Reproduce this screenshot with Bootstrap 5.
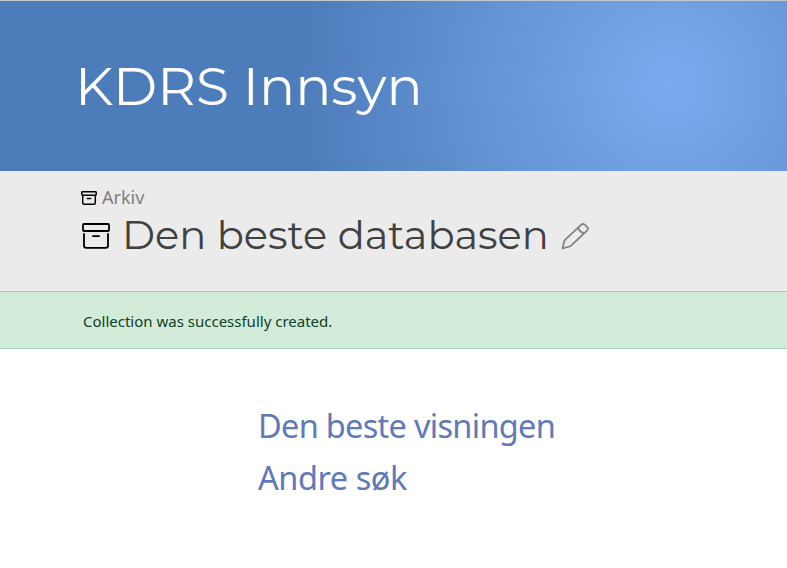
<!DOCTYPE html>
<html lang="nb">
<head>
<meta charset="utf-8">
<meta name="viewport" content="width=device-width, initial-scale=1">
<title>KDRS Innsyn</title>
<link href="https://cdn.jsdelivr.net/npm/bootstrap@5.3.0/dist/css/bootstrap.min.css" rel="stylesheet">
<style>
body { font-family: "Noto Sans", sans-serif; overflow: hidden; }
.site-head { height: 171px; border-top: 1px solid #c4c8cc; padding: 0 0 0 75px;
  background: radial-gradient(circle at 671px 84px, #7aabee 0, #4c7cba 376px); }
.site-name, .page-name { font-family: Montserrat, Inter, sans-serif; font-weight: 400; line-height: 1; white-space: nowrap; }
.site-name { font-size: 53.500px; }
.page-head { height: 120px; background: #ebebeb; padding: 14px 0 0 81px; }
.crumb { font-size: 18px; line-height: 25px; color: #808080; gap: 5px; }
.crumb svg, .page-row > svg { color: #000; }
.page-row { height: 52px; }
.page-name { font-size: 40px; color: #404040; margin: -2px 0 0 11px; }
.page-row .edit-link { color: #808080; margin-left: 12px; }
.notice { height: 58px; padding: 2px 0 0 83px; color: #0f3d25; background: #d3ecda; border: 1px solid #a3cfbb; border-width: 1px 0; font-size: 15px; }
.views { padding: 51px 0 0 258px; font-size: 32.500px; line-height: 52px; letter-spacing: -.7px; }
.views a { color: #6079b8; white-space: nowrap; }
.views a + a { letter-spacing: -.45px; }
</style>
<script src="https://cdn.jsdelivr.net/npm/bootstrap@5.3.0/dist/js/bootstrap.bundle.min.js"></script>
</head>
<body>
<header class="site-head d-flex align-items-center"><div class="site-name text-white">KDRS Innsyn</div></header>
<section class="page-head">
  <div class="crumb d-flex align-items-center">
    <svg width="16" height="14" viewBox="0 0 16 14" fill="none" stroke="currentColor" stroke-width="1.500" stroke-linejoin="round" stroke-linecap="round"><rect x=".8" y=".8" width="14.400" height="3.400" rx=".6"/><path d="M1.700 5.500v6.200q0 1.500 1.500 1.500h9.600q1.500 0 1.500-1.500V5.500M6.300 7.600h3.400"/></svg>
    <span>Arkiv</span>
  </div>
  <div class="page-row d-flex align-items-center">
    <svg class="flex-shrink-0" width="30" height="26" viewBox="0 0 30 26" fill="none" stroke="currentColor" stroke-width="1.800" stroke-linejoin="round" stroke-linecap="round"><rect x="2" y="1" width="26" height="7" rx="1"/><path d="M3 11v11.500q0 2.300 2.300 2.300h19.400q2.300 0 2.300-2.300V11M12 13.200h6"/></svg>
    <h1 class="page-name mb-0">Den beste databasen</h1>
    <a class="edit-link d-flex" href="#" aria-label="Edit">
      <svg width="28" height="28" viewBox="0 0 28 28" fill="none" stroke="currentColor" stroke-width="1.700" stroke-linejoin="round" stroke-linecap="round"><path d="M1.500 26.500 3.500 18.300 20.300 2.700q1.700-1.600 3.400 0l2.500 2.500q1.500 1.600 0 3.200L9.300 24.300ZM17.500 5.300q.5 5.400 6.300 5.500"/></svg>
    </a>
  </div>
</section>
<div class="notice d-flex align-items-center" role="status">Collection was successfully created.</div>
<main class="views d-flex flex-column align-items-start">
  <a class="text-decoration-none" href="#">Den beste visningen</a>
  <a class="text-decoration-none" href="#">Andre søk</a>
</main>
</body>
</html>
